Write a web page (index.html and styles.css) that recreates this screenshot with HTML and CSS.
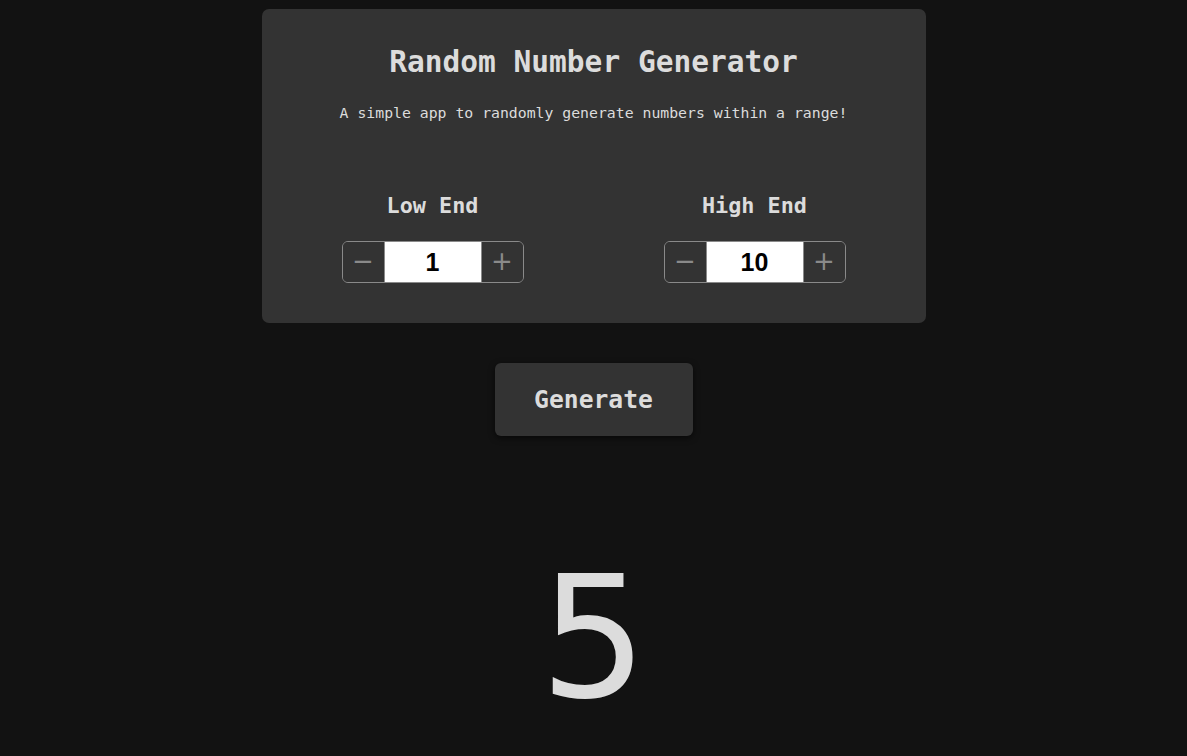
FILE: index.html
```html
<!DOCTYPE html>
<html>
<head>
<meta charset="utf-8">
<link rel="stylesheet" href="styles.css">
</head>
<body>
<main class="app">
  <section class="card">
    <h1 class="title">Random Number Generator</h1>
    <p class="subtitle">A simple app to randomly generate numbers within a range!</p>
    <div class="ranges">
      <div class="range">
        <h2 class="label">Low End</h2>
        <div class="stepper">
          <button class="step">&minus;</button>
          <span class="value">1</span>
          <button class="step">+</button>
        </div>
      </div>
      <div class="range">
        <h2 class="label">High End</h2>
        <div class="stepper">
          <button class="step">&minus;</button>
          <span class="value">10</span>
          <button class="step">+</button>
        </div>
      </div>
    </div>
  </section>
  <button class="generate">Generate</button>
  <div class="result">5</div>
</main>
</body>
</html>
```
FILE: styles.css
```css
html, body {
  margin: 0;
  padding: 0;
  background: #121212;
  height: 100%;
  overflow: hidden;
}
.app {
  display: flex;
  flex-direction: column;
  align-items: center;
  padding-top: 9px;
  font-family: "DejaVu Sans Mono", monospace;
  color: #dcdcdc;
}
.card {
  width: 664px;
  box-sizing: border-box;
  background: #333333;
  border-radius: 7px;
  padding: 36px 10px 40px;
  display: flex;
  flex-direction: column;
  align-items: center;
}
.title {
  margin: 0;
  font-size: 29.5px;
  line-height: 35px;
  font-weight: bold;
}
.subtitle {
  margin: 23px 0 0;
  font-size: 14.8px;
  line-height: 20px;
}
.ranges {
  margin-top: 70px;
  width: 100%;
  display: grid;
  grid-template-columns: 1fr 1fr;
}
.range {
  display: flex;
  flex-direction: column;
  align-items: center;
  gap: 22px;
}
.label {
  margin: 0;
  font-size: 21.8px;
  line-height: 26px;
  font-weight: bold;
}
.stepper {
  display: flex;
  width: 182px;
  height: 42px;
  box-sizing: border-box;
  border: 1px solid #8a8a8a;
  border-radius: 6px;
  overflow: hidden;
}
.step {
  width: 41px;
  border: none;
  background: #333333;
  color: #8a8a8a;
  font-family: "DejaVu Sans", sans-serif;
  font-size: 26px;
  line-height: 1;
  padding: 0 0 2px;
}
.value {
  flex: 1;
  background: #ffffff;
  color: #000000;
  border-left: 1px solid #8a8a8a;
  border-right: 1px solid #8a8a8a;
  font-family: "Liberation Sans", Arial, sans-serif;
  font-weight: bold;
  font-size: 25px;
  display: flex;
  align-items: center;
  justify-content: center;
}
.generate {
  margin-top: 40px;
  width: 198px;
  height: 73px;
  border: none;
  border-radius: 6px;
  background: #333333;
  color: #dcdcdc;
  font-family: "DejaVu Sans Mono", monospace;
  font-weight: bold;
  font-size: 24.7px;
  box-shadow: 0 2px 6px rgba(0, 0, 0, 0.6);
}
.result {
  margin-top: 118px;
  font-family: "DejaVu Sans", sans-serif;
  font-size: 169px;
  line-height: 1;
  color: #dcdcdc;
}
```
